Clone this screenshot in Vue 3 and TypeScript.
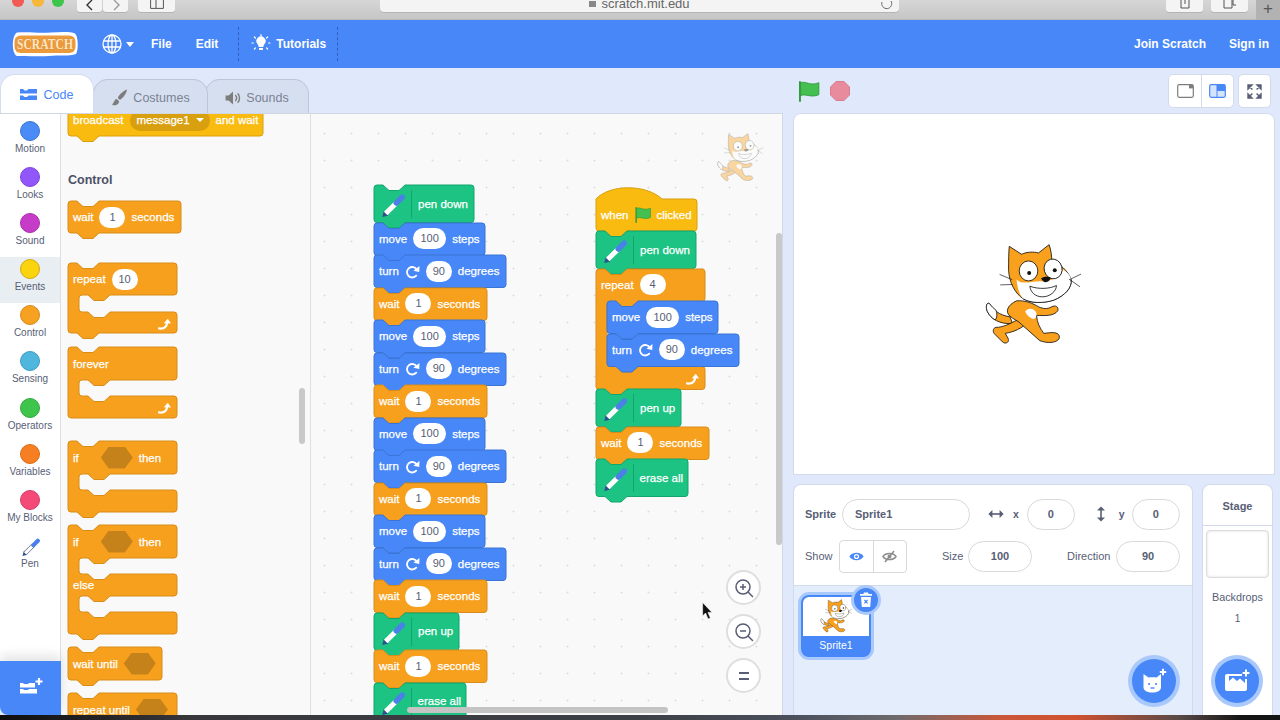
<script setup lang="ts">
type Part = { k: string; v?: string; w?: number; cls?: string }
type Row = { h: number; gap?: boolean; end?: boolean; parts?: Part[] }
type Block = {
  c?: string; w?: number; rows?: Row[]; hat?: boolean; cap?: boolean; open?: boolean;
  indent?: number; mt?: number; heading?: string; spacer?: number; pen?: boolean
}
type Stack = { cls: string; x?: number; y?: number; blocks: Block[] }

const t = (v: string): Part => ({ k: 't', v })
const n = (v: string, w = 26): Part => ({ k: 'n', v, w })
const ic = (k: string): Part => ({ k })
const H = 32.5

const move = (): Block => ({ c: 'motion', w: 111, rows: [{ h: H, parts: [t('move'), n('100', 33), t('steps')] }] })
const turn = (): Block => ({ c: 'motion', w: 132, rows: [{ h: H, parts: [t('turn'), ic('i-turn'), n('90'), t('degrees')] }] })
const wait = (): Block => ({ c: 'control', w: 113, rows: [{ h: H, parts: [t('wait'), n('1'), t('seconds')] }] })
const pen = (label: string, w: number): Block => ({ c: 'pen', w, pen: true, rows: [{ h: 37.5, parts: [ic('pen-cell'), t(label)] }] })

const palette: Block[] = [
  { c: 'events', w: 195, mt: -10, rows: [{ h: 32, parts: [t('broadcast'), { k: 'drop', v: 'message1' }, t('and wait')] }] },
  { heading: 'Control', mt: 34 },
  { c: 'control', w: 113, mt: 11, rows: [{ h: 32, parts: [t('wait'), n('1'), t('seconds')] }] },
  { c: 'control', w: 109, mt: 30, rows: [{ h: 32, parts: [t('repeat'), n('10')] }, { h: 17, gap: true }, { h: 21, end: true, parts: [ic('i-loop')] }] },
  { c: 'control', w: 109, mt: 14, cap: true, rows: [{ h: 33, parts: [t('forever')] }, { h: 16, gap: true }, { h: 22, end: true, parts: [ic('i-loop')] }] },
  { c: 'control', w: 109, mt: 23, rows: [{ h: 33, parts: [t('if'), { k: 'hex', cls: 'hex-if' }, t('then')] }, { h: 16, gap: true }, { h: 22 }] },
  { c: 'control', w: 109, mt: 13, rows: [{ h: 33, parts: [t('if'), { k: 'hex', cls: 'hex-if' }, t('then')] }, { h: 16, gap: true }, { h: 22, parts: [t('else')] }, { h: 16, gap: true }, { h: 22 }] },
  { c: 'control', w: 94, mt: 13, rows: [{ h: 33, parts: [t('wait until'), { k: 'hex' }] }] },
  { c: 'control', w: 109, mt: 13, rows: [{ h: 33, parts: [t('repeat until'), { k: 'hex' }] }, { h: 16, gap: true }, { h: 22 }] }
]

const leftStack: Block[] = [
  pen('pen down', 100),
  move(), turn(), wait(), move(), turn(), wait(), move(), turn(), wait(), move(), turn(), wait(),
  pen('pen up', 85), wait(), pen('erase all', 92)
]

const rightStack: Block[] = [
  { c: 'events', w: 101, hat: true, rows: [{ h: 43, parts: [t('when'), ic('i-flag'), t('clicked')] }] },
  pen('pen down', 100),
  { c: 'control', w: 109, open: true, rows: [{ h: H, parts: [t('repeat'), n('4')] }, { h: 65, gap: true }, { h: 23, end: true, parts: [ic('i-loop')] }] },
  { ...move(), indent: 11 }, { ...turn(), indent: 11 },
  { spacer: 23 },
  pen('pen up', 85), wait(), pen('erase all', 92)
]

const zones: { id: string; stacks: Stack[] }[] = [
  { id: 'palette', stacks: [{ cls: 'stack-flow', blocks: palette }] },
  { id: 'workspace', stacks: [
    { cls: 'stack-free', x: 63, y: 71, blocks: leftStack },
    { cls: 'stack-free', x: 285, y: 74, blocks: rightStack }
  ] }
]

function totalH(b: Block): number {
  return (b.rows ?? []).reduce((s, r) => s + r.h, 0)
}
function flowH(b: Block): number | undefined {
  if (b.spacer) return b.spacer
  if (b.heading) return 20
  return b.open ? b.rows![0].h : totalH(b)
}
function pathFor(b: Block): string {
  const w = b.w ?? 0
  const i = 11
  let d = b.hat
    ? `M0 11 C14 -4 50 -4 66 11 H${w - 3} Q${w} 11 ${w} 14`
    : `M0 3 Q0 0 3 0 H9 L15 5.5 H25 L31 0 H${w - 3} Q${w} 0 ${w} 3`
  let y = 0
  for (const r of b.rows ?? []) {
    const y0 = y
    y += r.h
    if (r.gap) {
      d += ` V${y0 - 3} Q${w} ${y0} ${w - 3} ${y0} H${i + 31} L${i + 25} ${y0 + 5.5} H${i + 15} L${i + 9} ${y0} H${i + 3} Q${i} ${y0} ${i} ${y0 + 3}`
      d += ` V${y - 3} Q${i} ${y} ${i + 3} ${y} H${i + 9} L${i + 15} ${y + 5.5} H${i + 25} L${i + 31} ${y} H${w - 3} Q${w} ${y} ${w} ${y + 3}`
    }
  }
  d += ` V${y - 3} Q${w} ${y} ${w - 3} ${y}`
  d += b.cap ? ' H3' : ` H31 L25 ${y + 5.5} H15 L9 ${y} H3`
  d += ` Q0 ${y} 0 ${y - 3} Z`
  return d
}

const categories = [
  { label: 'Motion', fill: '#4a8bf8', line: '#3a74d0' },
  { label: 'Looks', fill: '#9257fb', line: '#7a45d8' },
  { label: 'Sound', fill: '#c63cc9', line: '#a830ab' },
  { label: 'Events', fill: '#fbd40f', line: '#d4a90a', active: true },
  { label: 'Control', fill: '#f7a120', line: '#d48a1a' },
  { label: 'Sensing', fill: '#4fb7de', line: '#3d9cc2' },
  { label: 'Operators', fill: '#3fc44c', line: '#34a83f' },
  { label: 'Variables', fill: '#f57f22', line: '#d86c18' },
  { label: 'My Blocks', fill: '#f34a78', line: '#d63a66' },
  { label: 'Pen', pen: true }
]
const zooms = ['i-zoomin', 'i-zoomout', 'i-reset']
</script>

<template>
  <div class="page">
    <svg class="sprites" width="0" height="0" aria-hidden="true">
      <symbol id="i-pen" viewBox="0 0 24 24">
        <path d="M3 24 L4.4 18.4 L8.8 22.6 Z" fill="#2f4f8f" />
        <path d="M6.2 20.8 L16 11" stroke="#fff" stroke-width="4.6" />
        <path d="M16 11 L21.4 5.8" stroke="#4a80e8" stroke-width="5.2" stroke-linecap="round" />
      </symbol>
      <symbol id="i-pen-outlined" viewBox="0 0 24 24">
        <path d="M3 24 L4.4 18.4 L8.8 22.6 Z" fill="#2f4f8f" />
        <path d="M6.2 20.8 L16 11" stroke="#4f5a78" stroke-width="5.2" />
        <path d="M6.2 20.8 L16 11" stroke="#fff" stroke-width="3.8" />
        <path d="M16 11 L21.4 5.8" stroke="#4a80e8" stroke-width="5" stroke-linecap="round" />
      </symbol>
      <symbol id="i-turn" viewBox="0 0 16 16">
        <path d="M12.6 6 A5.6 5.6 0 1 0 12 12.4" fill="none" stroke="#fff" stroke-width="2" stroke-linecap="round" />
        <path d="M15.4 2.2 L15.2 8.6 L9 7.2 Z" fill="#fff" />
      </symbol>
      <symbol id="i-loop" viewBox="0 0 14 12">
        <path d="M1 10.4 C5.5 11 8.6 9 9.2 4.6" fill="none" stroke="#fff" stroke-width="2.2" stroke-linecap="round" />
        <path d="M5.8 5.2 L9.8 .8 L13 5.6 Z" fill="#fff" />
      </symbol>
      <symbol id="i-flag" viewBox="0 0 20 20">
        <path d="M1.4 1 V19" stroke="#2f9a3a" stroke-width="1.8" stroke-linecap="round" />
        <path d="M2 1.6 C7 -.2 11 5 19.4 1.6 V13 C11 16.6 7 11.4 2 14 Z" fill="#45bf4f" stroke="#2f9a3a" stroke-width=".8" stroke-linejoin="round" />
      </symbol>
      <symbol id="i-cat" viewBox="75 40 295 310">
        <path d="M150 262 C118 258 98 240 88 222 C80 218 76 232 82 246 C92 268 120 286 158 282 Z" fill="#f9a11d" stroke="#111" stroke-width="2.5" />
        <path d="M88 222 C80 218 76 232 82 246 C88 258 96 266 106 272 C112 264 112 252 108 242 C100 236 94 230 88 222 Z" fill="#fff" stroke="#111" stroke-width="2.5" />
        <path d="M178 268 C150 284 128 294 108 294 C98 296 98 308 104 314 L128 338 C138 346 150 338 144 326 L136 312 C160 308 186 298 204 278 Z" fill="#f9a11d" stroke="#111" stroke-width="2.5" />
        <path d="M170 214 C144 226 134 246 150 260 C160 270 176 274 186 286 L240 334 C260 342 290 342 298 328 C302 314 290 308 270 310 L252 312 C240 296 232 280 230 258 C250 258 282 262 294 244 C298 232 286 226 276 232 C262 240 250 238 236 232 C220 222 196 212 170 214 Z" fill="#f9a11d" stroke="#111" stroke-width="2.5" />
        <path d="M196 246 C206 232 226 238 230 252 C230 264 226 270 218 268 C208 264 200 256 196 246 Z" fill="#fff" />
        <path d="M148 50 L185 74 C202 66 222 66 236 70 L268 45 C274 62 276 80 276 94 C300 102 326 124 334 150 C338 174 316 198 282 212 C250 222 214 222 190 208 C166 192 148 160 146 122 C146 96 146 72 148 50 Z" fill="#f9a11d" stroke="#111" stroke-width="2.5" stroke-linejoin="round" />
        <path d="M170 150 C190 170 220 150 255 156 C285 150 300 140 310 120 C326 130 332 140 334 150 C338 174 316 198 282 212 C250 222 214 222 190 208 C178 196 172 172 170 150 Z" fill="#fff" />
        <path d="M334 150 C338 174 316 198 282 212 C250 222 214 222 190 208" fill="none" stroke="#111" stroke-width="2.5" />
        <ellipse cx="206" cy="124" rx="28" ry="30" fill="#fff" stroke="#111" stroke-width="2.5" />
        <ellipse cx="280" cy="118" rx="27" ry="30" fill="#fff" stroke="#111" stroke-width="2.5" transform="rotate(-15 280 118)" />
        <circle cx="208" cy="130" r="6" fill="#111" />
        <circle cx="285" cy="122" r="6" fill="#111" />
        <path d="M244 146 C250 140 268 140 272 144 C272 152 264 158 258 158 C252 158 246 152 244 146 Z" fill="#111" />
        <path d="M210 170 C236 180 270 178 290 168 C290 186 270 202 248 202 C226 202 212 188 210 170 Z" fill="#fff" stroke="#111" stroke-width="2.5" />
        <path d="M120 135 L156 150 M122 166 L156 165 M330 150 L363 134 M330 150 L360 171" stroke="#111" stroke-width="2" fill="none" stroke-linecap="round" />
      </symbol>
    </svg>

    <div class="chrome">
      <i class="light red"></i><i class="light amber"></i><i class="light green"></i>
      <div class="chrome-btn nav-back">
        <svg width="10" height="12" viewBox="0 0 10 12"><path d="M7 0 L2 5 L7 10" fill="none" stroke="#333" stroke-width="1.4" /></svg>
      </div>
      <div class="chrome-btn nav-fwd">
        <svg width="10" height="12" viewBox="0 0 10 12"><path d="M3 0 L8 5 L3 10" fill="none" stroke="#999" stroke-width="1.4" /></svg>
      </div>
      <div class="chrome-btn nav-side">
        <svg width="14" height="12" viewBox="0 0 14 12"><path d="M.6 0 V8.4 H13.4 V0 M6 0 V8.4" fill="none" stroke="#555" /></svg>
      </div>
      <div class="url">
        <i class="lock"></i><span>scratch.mit.edu</span>
        <svg class="reload" width="14" height="12" viewBox="0 0 14 12"><path d="M11 1 A5 5 0 1 1 2 2" fill="none" stroke="#666" /></svg>
      </div>
      <div class="chrome-btn nav-share">
        <svg width="12" height="12" viewBox="0 0 12 12"><path d="M2 0 V8 H10 V0 M6 0 V4" fill="none" stroke="#555" /></svg>
      </div>
      <div class="chrome-btn nav-tabs">
        <svg width="14" height="12" viewBox="0 0 14 12"><path d="M1 0 V8 H9 V0 M10 0 V5 H13" fill="none" stroke="#555" /></svg>
      </div>
      <div class="new-tab">+</div>
    </div>

    <header class="menubar">
      <svg class="logo" width="68" height="26" viewBox="0 0 68 26">
        <path d="M6 1.5 C20 .5 26 2.5 40 1.5 C50 .8 60 .5 64 2.5 C67.5 5 67.5 20 65 23 C58 25.5 48 24 38 25 C26 25.8 14 24.5 6 25 C.5 23 .5 4 6 1.5 Z" fill="#fff" />
        <rect x="3.5" y="4.5" width="61" height="17.5" rx="6" fill="#eb9a3c" />
        <text x="34" y="18.4" text-anchor="middle" class="logo-text" textLength="56" lengthAdjust="spacingAndGlyphs">SCRATCH</text>
      </svg>
      <svg class="globe" width="20" height="20" viewBox="0 0 20 20">
        <g fill="none" stroke="#fff" stroke-width="1.3">
          <circle cx="10" cy="10" r="9" />
          <ellipse cx="10" cy="10" rx="4" ry="9" />
          <path d="M10 1 V19 M1.6 7 H18.4 M1.6 13 H18.4" />
        </g>
      </svg>
      <i class="caret"></i>
      <span class="menu-item file">File</span>
      <span class="menu-item edit">Edit</span>
      <div class="tut">
        <svg width="20" height="20" viewBox="0 0 20 20">
          <path d="M6.4 10 A4.6 4.6 0 1 1 13.6 10 C12.6 11.2 12.4 12 12.4 13 H7.6 C7.6 12 7.4 11.2 6.4 10 Z M8 14 H12 V16 H8 Z" fill="#fff" />
          <path d="M10 .6 V2 M3.4 3 L4.4 4 M16.6 3 L15.6 4 M1 9 H2.4 M17.6 9 H19 M3.4 15 L4.4 14 M16.6 15 L15.6 14" stroke="#fff" stroke-width="1.2" stroke-linecap="round" />
        </svg>
        <span class="menu-item">Tutorials</span>
      </div>
      <span class="menu-item join">Join Scratch</span>
      <span class="menu-item sign">Sign in</span>
    </header>

    <main class="body">
      <section class="left">
        <nav class="tabs">
          <div class="tab active">
            <svg width="20" height="14" viewBox="0 0 20 14">
              <path d="M1 1 H4 L5.5 2.4 H8 L9.5 1 H18 V5.5 H1 Z M1 7.5 H4 L5.5 9 H8 L9.5 7.5 H18 V12 H1 Z" fill="#4787f7" />
            </svg>
            <span>Code</span>
          </div>
          <div class="tab second">
            <svg width="17" height="18" viewBox="0 0 17 18">
              <path d="M16 .6 C12 2 8.4 5.6 6.8 9 L9 11 C12 9 15.4 5 16 .6 Z M5.6 10 C3 10.4 3.6 13.6 1 15.4 C4 17.4 8.4 15.6 8 12 Z" fill="#7d7d7d" />
            </svg>
            <span>Costumes</span>
          </div>
          <div class="tab third">
            <svg width="16" height="14" viewBox="0 0 16 14">
              <path d="M.6 4.4 H3.6 L8 .6 V13.4 L3.6 9.6 H.6 Z" fill="#7d7d7d" />
              <path d="M10.6 4.4 C11.8 5.8 11.8 8.2 10.6 9.6 M13 2.8 C15 5 15 9 13 11.2" fill="none" stroke="#7d7d7d" stroke-width="1.4" stroke-linecap="round" />
            </svg>
            <span>Sounds</span>
          </div>
        </nav>

        <div class="panel">
          <aside class="cats">
            <div v-for="c in categories" :key="c.label" class="cat" :class="{ on: c.active }">
              <svg v-if="c.pen" class="cat-pen" viewBox="0 0 24 24"><use href="#i-pen-outlined" /></svg>
              <i v-else class="dot" :style="{ background: c.fill, borderColor: c.line }"></i>
              <span>{{ c.label }}</span>
            </div>
            <div class="ext">
              <svg width="24" height="22" viewBox="0 0 24 22">
                <path d="M1 6 H4 L5 7 H9 L10 6 H16 V10.4 H1 Z M1 12 H4 L5 13 H9 L10 12 H18 V16.6 H1 Z" fill="#fff" />
                <path d="M20 1 V8 M16.5 4.5 H23.5" stroke="#fff" stroke-width="2.2" />
              </svg>
            </div>
          </aside>

          <div v-for="z in zones" :key="z.id" class="zone" :class="z.id">
            <div
              v-for="(s, si) in z.stacks"
              :key="si"
              :class="s.cls"
              :style="s.x !== undefined ? { left: s.x + 'px', top: s.y + 'px' } : undefined"
            >
              <div
                v-for="(b, bi) in s.blocks"
                :key="bi"
                class="block"
                :class="[b.c, { heading: b.heading }]"
                :style="{
                  width: b.w ? b.w + 'px' : undefined,
                  height: flowH(b) + 'px',
                  marginLeft: b.indent ? b.indent + 'px' : undefined,
                  marginTop: b.mt ? b.mt + 'px' : undefined
                }"
              >
                <template v-if="b.heading">{{ b.heading }}</template>
                <template v-else-if="b.rows">
                  <svg class="shape" :width="b.w" :height="totalH(b) + 7">
                    <path :d="pathFor(b)" />
                  </svg>
                  <div
                    v-for="(r, ri) in b.rows"
                    :key="ri"
                    class="row"
                    :class="{ end: r.end, hatrow: b.hat }"
                    :style="{ height: r.h + 'px' }"
                  >
                    <template v-for="(p, pi) in r.parts" :key="pi">
                      <span v-if="p.k === 't'" class="txt">{{ p.v }}</span>
                      <span v-else-if="p.k === 'n'" class="pill" :style="{ width: p.w + 'px' }">{{ p.v }}</span>
                      <span v-else-if="p.k === 'drop'" class="drop">{{ p.v }}<i class="drop-caret"></i></span>
                      <span v-else-if="p.k === 'hex'" class="hex" :class="p.cls"></span>
                      <span v-else-if="p.k === 'pen-cell'" class="pen-cell">
                        <svg width="26" height="26" viewBox="0 0 24 24"><use href="#i-pen" /></svg>
                      </span>
                      <svg v-else class="ico" :class="p.k"><use :href="'#' + p.k" /></svg>
                    </template>
                  </div>
                </template>
              </div>
            </div>

            <template v-if="z.id === 'palette'">
              <i class="scroll-v pal"></i>
            </template>
            <template v-else>
              <svg class="watermark" viewBox="0 0 295 310"><use href="#i-cat" width="295" height="310" /></svg>
              <i class="scroll-v work"></i>
              <i class="scroll-h"></i>
              <div class="zoombar">
                <button v-for="zb in zooms" :key="zb" class="zoom-btn">
                  <svg v-if="zb !== 'i-reset'" width="20" height="20" viewBox="0 0 20 20" fill="none" stroke="#575e75" stroke-width="1.5">
                    <circle cx="9" cy="9" r="7" />
                    <path d="M14 14 L18.5 18.5" stroke-linecap="round" />
                    <path d="M6 9 H12" />
                    <path v-if="zb === 'i-zoomin'" d="M9 6 V12" />
                  </svg>
                  <svg v-else width="14" height="10" viewBox="0 0 14 10"><path d="M2 2 H12 M2 8 H12" stroke="#575e75" stroke-width="2" /></svg>
                </button>
              </div>
              <svg class="cursor" width="11" height="18" viewBox="0 0 11 18">
                <path d="M.6 .6 V14 L3.6 11 L6 17 L8.4 16 L6 10.4 H10 Z" fill="#111" stroke="#fff" stroke-width=".6" />
              </svg>
            </template>
          </div>
        </div>
      </section>

      <section class="right">
        <div class="stage-top">
          <svg class="green-flag" width="22" height="21"><use href="#i-flag" /></svg>
          <svg class="stop" width="20" height="20" viewBox="0 0 20 20">
            <path d="M6 .5 H14 L19.5 6 V14 L14 19.5 H6 L.5 14 V6 Z" fill="#e88b9c" stroke="#d87a8c" />
          </svg>
          <div class="layout-group">
            <div class="lbtn">
              <svg width="17" height="14" viewBox="0 0 17 14">
                <rect x=".7" y=".7" width="15.6" height="12.6" rx="1.5" fill="none" stroke="#7d7d7d" stroke-width="1.2" />
                <rect x="12" y="1" width="4" height="3.4" fill="#7d7d7d" />
              </svg>
            </div>
            <div class="lbtn">
              <svg width="17" height="14" viewBox="0 0 17 14">
                <rect x=".7" y=".7" width="15.6" height="12.6" rx="1.5" fill="#d5e4fd" stroke="#4787f7" stroke-width="1.2" />
                <path d="M8 .7 H16 V7 H8 Z" fill="#4787f7" />
                <path d="M8 .7 V13.3" stroke="#4787f7" />
              </svg>
            </div>
          </div>
          <div class="lbtn full">
            <svg width="15" height="15" viewBox="0 0 15 15">
              <path d="M1 1 L5 1 L1 5 Z M14 1 L10 1 L14 5 Z M1 14 L5 14 L1 10 Z M14 14 L10 14 L14 10 Z M2 2 L5.4 5.4 M13 2 L9.6 5.4 M2 13 L5.4 9.6 M13 13 L9.6 9.6" fill="#575e75" stroke="#575e75" stroke-width="1.4" />
            </svg>
          </div>
        </div>

        <div class="stage">
          <svg class="stage-cat" viewBox="0 0 295 310"><use href="#i-cat" width="295" height="310" /></svg>
        </div>

        <div class="lower">
          <div class="sprite-pane">
            <div class="info">
              <div class="info-row">
                <span class="lbl strong w37">Sprite</span>
                <span class="field name">Sprite1</span>
                <svg class="ml18" width="16" height="10" viewBox="0 0 16 10">
                  <path d="M3 5 H13" stroke="#575e75" stroke-width="1.6" />
                  <path d="M4.4 1 L.4 5 L4.4 9 Z M11.6 1 L15.6 5 L11.6 9 Z" fill="#575e75" />
                </svg>
                <span class="lbl strong axis ml9">x</span>
                <span class="field num w48 ml8">0</span>
                <svg class="ml21" width="10" height="16" viewBox="0 0 10 16">
                  <path d="M5 3 V13" stroke="#575e75" stroke-width="1.6" />
                  <path d="M1 4.4 L5 .4 L9 4.4 Z M1 11.6 L5 15.6 L9 11.6 Z" fill="#575e75" />
                </svg>
                <span class="lbl strong axis ml13">y</span>
                <span class="field num w48 ml7">0</span>
              </div>
              <div class="info-row">
                <span class="lbl w34">Show</span>
                <div class="toggle">
                  <span class="tog on">
                    <svg width="15" height="11" viewBox="0 0 15 11">
                      <path d="M.4 5.5 C3 .6 12 .6 14.6 5.5 C12 10.4 3 10.4 .4 5.5 Z" fill="#4787f7" />
                      <circle cx="7.5" cy="5.5" r="2.6" fill="#fff" />
                      <circle cx="7.5" cy="5.5" r="1.3" fill="#4787f7" />
                    </svg>
                  </span>
                  <span class="tog">
                    <svg width="15" height="13" viewBox="0 0 15 13">
                      <path d="M1 6.5 C3.4 2.4 11.6 2.4 14 6.5 C11.6 10.6 3.4 10.6 1 6.5 Z" fill="none" stroke="#8d8d8d" stroke-width="1.5" />
                      <circle cx="7.5" cy="6.5" r="2" fill="#8d8d8d" />
                      <path d="M3 12 L12 1" stroke="#8d8d8d" stroke-width="1.5" />
                    </svg>
                  </span>
                </div>
                <span class="lbl ml35 w26">Size</span>
                <span class="field num w64">100</span>
                <span class="lbl ml35 w49">Direction</span>
                <span class="field num w64">90</span>
              </div>
            </div>
            <div class="sprite-list">
              <div class="card">
                <div class="thumb">
                  <svg class="card-cat" viewBox="0 0 295 310"><use href="#i-cat" width="295" height="310" /></svg>
                </div>
                <div class="card-name">Sprite1</div>
                <div class="trash">
                  <svg width="14" height="16" viewBox="0 0 14 16">
                    <path d="M5 .6 H9 L9.6 2 H13 V3.8 H1 V2 H4.4 Z M2 5 H12 L11.2 15 H2.8 Z" fill="#fff" />
                    <path d="M5.4 8 L8.6 11.4 M8.6 8 L5.4 11.4" stroke="#4787f7" stroke-width="1.2" />
                  </svg>
                </div>
              </div>
              <div class="fab sprite-fab">
                <svg width="26" height="26" viewBox="0 0 26 26">
                  <path d="M2.5 6 L7.5 9.6 C10 9 13 9 15.5 9.6 L20 6 V19 C20 23 16 24.5 11.5 24.5 C6.5 24.5 2.5 23 2.5 19 Z" fill="#fff" />
                  <path d="M8 16 H8.1 M15 16 H15.1" stroke="#4787f7" stroke-width="2" stroke-linecap="round" />
                  <path d="M9.5 20 H13.5" stroke="#4787f7" stroke-width="1.4" />
                  <path d="M22 .8 V7.2 M18.8 4 H25.2" stroke="#fff" stroke-width="2" />
                </svg>
              </div>
            </div>
          </div>

          <div class="stage-pane">
            <div class="stage-title">Stage</div>
            <div class="stage-thumb"></div>
            <div class="backdrops">Backdrops</div>
            <div class="backdrops one">1</div>
            <div class="fab backdrop-fab">
              <svg width="26" height="24" viewBox="0 0 26 24">
                <path d="M3 5 H18 V7 H5 V12 L9 8.6 L13 12 L16 9.6 L21 14 V10 H23 V20 A2 2 0 0 1 21 22 H3 A2 2 0 0 1 1 20 V7 A2 2 0 0 1 3 5 Z" fill="#fff" />
                <path d="M22 .6 V7.4 M18.6 4 H25.4" stroke="#fff" stroke-width="2" />
              </svg>
            </div>
          </div>
        </div>
      </section>
    </main>
    <div class="desk"></div>
  </div>
</template>

<style>
html, body { margin: 0; background: #e0e9fb; }
</style>

<style scoped>
.page {
  width: 1280px;
  height: 720px;
  overflow: hidden;
  display: flex;
  flex-direction: column;
  font-family: "Liberation Sans", Arial, sans-serif;
  background: #e0e9fb;
  color: #575e75;
  position: relative;
}
.sprites { position: absolute; }

/* browser chrome */
.chrome {
  height: 20px;
  flex: none;
  display: flex;
  align-items: flex-start;
  padding-left: 12px;
  background: linear-gradient(#d6d6d6, #c6c6c6);
  box-sizing: border-box;
  border-bottom: 1px solid #b8b8b8;
}
.light { width: 12px; height: 12px; border-radius: 50%; margin: -5px 8px 0 0; }
.light.red { background: #f25a55; }
.light.amber { background: #f6b73a; }
.light.green { background: #3ec64b; }
.chrome-btn {
  height: 12px;
  background: #f4f4f4;
  border-radius: 0 0 3px 3px;
  display: flex;
  justify-content: center;
  align-items: flex-start;
  overflow: hidden;
  box-shadow: 0 1px 0 #b4b4b4;
}
.nav-back { width: 25px; margin-left: 5px; }
.nav-fwd { width: 25px; margin-left: 1px; }
.nav-side { width: 37px; margin-left: 10px; }
.url {
  width: 519px;
  height: 12px;
  margin-left: 205px;
  background: #f4f4f4;
  border-radius: 0 0 4px 4px;
  box-shadow: 0 1px 0 #b4b4b4;
  position: relative;
  display: flex;
  justify-content: center;
  align-items: center;
  font-size: 13px;
  color: #666;
  gap: 5px;
  overflow: hidden;
}
.url span { position: relative; top: -3px; }
.lock { width: 7px; height: 6px; background: #888; position: relative; top: -2px; }
.reload { position: absolute; right: 5px; top: 0; }
.nav-share { width: 37px; margin-left: 267px; }
.nav-tabs { width: 37px; margin-left: 8px; }
.new-tab {
  width: 24px;
  height: 20px;
  margin-left: 8px;
  background: #b2b2b2;
  color: #555;
  font-size: 17px;
  line-height: 18px;
  text-align: center;
}

/* menu */
.menubar {
  height: 48px;
  flex: none;
  background: #4787f7;
  display: flex;
  align-items: center;
  color: #fff;
}
.logo { margin-left: 11px; }
.logo-text {
  font-family: "Liberation Serif", serif;
  font-size: 15px;
  font-weight: 700;
  fill: #fde6c4;
  stroke: #d9832a;
  stroke-width: .5px;
  paint-order: stroke;
}
.globe { margin-left: 23px; }
.caret {
  width: 0; height: 0; margin-left: 4px;
  border: 4px solid transparent; border-top: 5px solid #fff; border-bottom: 0;
}
.menu-item { font-size: 12px; font-weight: 700; }
.file { margin-left: 17px; }
.edit { margin-left: 24px; }
.tut {
  margin-left: 20px;
  height: 34px;
  width: 100px;
  padding-left: 12px;
  box-sizing: border-box;
  display: flex;
  align-items: center;
  gap: 5px;
  border-left: 1px dashed rgba(0, 0, 60, .3);
  border-right: 1px dashed rgba(0, 0, 60, .3);
}
.join { margin-left: auto; }
.sign { margin: 0 11px 0 23px; }

/* layout */
.body { flex: none; height: 647px; display: flex; }
.left { width: 783px; flex: none; display: flex; flex-direction: column; }
.right { width: 482px; margin-left: 10px; flex: none; display: flex; flex-direction: column; }

/* tabs */
.tabs { height: 45px; flex: none; display: flex; align-items: flex-end; }
.tab {
  height: 34px;
  box-sizing: border-box;
  background: #d6dff0;
  border: 1px solid #bcc6da;
  border-bottom: 0;
  border-radius: 15px 15px 0 0;
  display: flex;
  justify-content: center;
  align-items: center;
  gap: 5px;
  padding-top: 2px;
  font-size: 12.5px;
  color: #7b8294;
  position: relative;
}
.tab.active {
  height: 39px;
  width: 94px;
  background: #fff;
  color: #4787f7;
  font-size: 12.5px;
  border-color: #d4dced;
  z-index: 2;
  padding: 2px 2px 0 0;
}
.tab.second { width: 115px; margin-left: -1px; z-index: 1; }
.tab.third { width: 104px; margin-left: -3px; }

/* panel */
.panel {
  flex: 1;
  min-height: 0;
  display: flex;
  background: #f9f9f9;
  border-right: 1px solid #cfd6e4;
  border-top: 1px solid #cfd6e4;
  border-bottom-left-radius: 8px;
  overflow: hidden;
  position: relative;
}
.cats {
  width: 61px;
  flex: none;
  background: #fff;
  border-right: 1px solid #dcdfe5;
  box-sizing: border-box;
  padding-top: 5px;
  position: relative;
}
.cat {
  height: 46.1px;
  display: flex;
  flex-direction: column;
  align-items: center;
  font-size: 10px;
  color: #575e75;
  gap: 2px;
  box-sizing: border-box;
  padding-top: 1px;
  line-height: 12px;
}
.cat.on { background: #e9eef2; }
.dot { width: 20px; height: 20px; box-sizing: border-box; border-radius: 50%; border: 1px solid; flex: none; margin-top: 1px; }
.cat-pen { width: 20px; height: 20px; flex: none; margin-top: 1px; }
.ext {
  position: absolute;
  left: 0; right: -1px; bottom: 0;
  height: 54px;
  background: #4787f7;
  display: flex;
  align-items: center;
  justify-content: center;
  box-shadow: 0 -6px 10px rgba(0, 0, 0, .1);
}

.zone { position: relative; overflow: hidden; }
.palette { width: 250px; flex: none; box-sizing: border-box; padding-left: 7px; border-right: 1px solid #dcdfe5; }
.workspace {
  flex: 1;
  background-color: #f9f9f9;
  background-image: radial-gradient(circle at center, #dedede .8px, transparent 1.2px);
  background-size: 27px 27px;
  background-position: 0 6px;
}
.stack-flow { display: flex; flex-direction: column; align-items: flex-start; }
.stack-free { position: absolute; display: flex; flex-direction: column; align-items: flex-start; }

/* blocks */
.block { position: relative; flex: none; color: #fff; font-size: 11.5px; }
.block.heading { font-size: 12.5px; font-weight: 700; color: #4b5168; line-height: 20px; }
.shape { position: absolute; left: 0; top: 0; overflow: visible; }
.shape path { stroke-width: 1; }
.motion .shape path { fill: #4787f7; stroke: #3b74d4; }
.control .shape path { fill: #f6a01e; stroke: #d88d18; }
.events .shape path { fill: #f9bb10; stroke: #d99f0c; }
.pen .shape path { fill: #1cc383; stroke: #13a56e; }
.row {
  position: relative;
  display: flex;
  align-items: center;
  gap: 6px;
  padding: 0 5px;
  box-sizing: border-box;
  white-space: nowrap;
}
.row.end { justify-content: flex-end; }
.row.hatrow { padding-top: 11px; }
.txt { -webkit-text-stroke: .25px #fff; }
.pill {
  height: 21px;
  flex: none;
  border-radius: 11px;
  background: #fff;
  color: #575e75;
  text-align: center;
  line-height: 21px;
  font-size: 11px;
}
.drop {
  height: 21px;
  width: 80px;
  flex: none;
  box-sizing: border-box;
  padding-left: 7px;
  border-radius: 11px;
  background: #d89f0e;
  color: #fff;
  display: flex;
  align-items: center;
  gap: 6px;
  -webkit-text-stroke: .25px #fff;
}
.drop-caret {
  width: 0; height: 0;
  border: 4px solid transparent; border-top: 4px solid #fff; border-bottom: 0;
}
.hex {
  width: 32px;
  height: 22px;
  flex: none;
  background: #c5821a;
  clip-path: polygon(25% 0, 75% 0, 100% 50%, 75% 100%, 25% 100%, 0 50%);
}
.hex-if { margin: 0 0 0 16px; }
.pen-cell {
  width: 33px;
  height: 28px;
  margin-top: 1px;
  box-sizing: border-box;
  border-right: 1px solid #13a56e;
  display: flex;
  align-items: center;
}
.ico { flex: none; }
.i-turn { width: 15px; height: 15px; }
.i-loop { width: 14px; height: 12px; margin-top: 2px; }
.i-flag { width: 16px; height: 16px; margin: 0; }

/* workspace overlays */
.scroll-v { position: absolute; width: 6px; background: #c9c9c9; border-radius: 3px; }
.scroll-v.pal { left: 238px; top: 274px; height: 56px; }
.scroll-v.work { right: 0; top: 119px; height: 312px; }
.scroll-h {
  position: absolute;
  left: 96px;
  bottom: 2px;
  width: 261px;
  height: 6px;
  background: #c4c4c4;
  border-radius: 3px;
}
.watermark { position: absolute; left: 406px; top: 18px; width: 47px; height: 51px; opacity: .4; }
.zoombar {
  position: absolute;
  left: 415px;
  top: 456px;
  display: flex;
  flex-direction: column;
  gap: 9px;
}
.zoom-btn {
  width: 35px;
  height: 35px;
  padding: 0;
  border: 2px solid #dedede;
  border-radius: 50%;
  background: #fff;
  display: flex;
  align-items: center;
  justify-content: center;
}
.cursor { position: absolute; left: 391px; top: 488px; }

/* stage */
.stage-top { height: 45px; flex: none; display: flex; align-items: flex-start; }
.green-flag { margin: 13px 0 0 5px; }
.stop { margin: 13px 0 0 10px; }
.layout-group {
  margin: 6px 0 0 318px;
  display: flex;
  background: #fff;
  border: 1px solid #d3dbeb;
  border-radius: 5px;
}
.lbtn {
  width: 32px;
  height: 32px;
  box-sizing: border-box;
  display: flex;
  align-items: center;
  justify-content: center;
  background: #fff;
  border-radius: 5px;
}
.layout-group .lbtn + .lbtn { border-left: 1px solid #d3dbeb; border-radius: 0 5px 5px 0; }
.lbtn.full { width: 33px; height: 34px; margin: 6px 0 0 4px; border: 1px solid #d3dbeb; }
.stage {
  height: 362px;
  flex: none;
  box-sizing: border-box;
  background: #fff;
  border: 1px solid #d3dbeb;
  border-radius: 8px 8px 0 0;
  position: relative;
}
.stage-cat { position: absolute; left: 191px; top: 129px; width: 98px; height: 103px; }

.lower { margin-top: 9px; flex: 1; display: flex; min-height: 0; gap: 9px; }
.sprite-pane {
  width: 400px;
  flex: none;
  display: flex;
  flex-direction: column;
  border: 1px solid #d3dbeb;
  border-bottom: 0;
  box-sizing: border-box;
  border-radius: 8px 8px 0 0;
  overflow: hidden;
}
.info {
  height: 101px;
  flex: none;
  box-sizing: border-box;
  background: #fff;
  border-bottom: 1px solid #d3dbeb;
  padding: 13px 0 0 11px;
  display: flex;
  flex-direction: column;
  gap: 10px;
}
.info-row { display: flex; align-items: center; height: 32px; }
.lbl { font-size: 11px; color: #575e75; flex: none; white-space: nowrap; }
.strong { font-weight: 700; }
.axis { font-size: 10.5px; }
.w34 { width: 34px; } .w37 { width: 37px; } .w26 { width: 26px; } .w49 { width: 49px; }
.ml7 { margin-left: 7px; } .ml8 { margin-left: 8px; } .ml9 { margin-left: 9px; } .ml13 { margin-left: 13px; }
.ml18 { margin-left: 18px; } .ml21 { margin-left: 21px; } .ml35 { margin-left: 35px; }
.field {
  height: 31px;
  box-sizing: border-box;
  border: 1px solid #d9d9d9;
  border-radius: 16px;
  font-size: 11px;
  font-weight: 700;
  color: #575e75;
  line-height: 29px;
  flex: none;
}
.field.name { width: 128px; padding-left: 12px; }
.field.num { text-align: center; }
.w48 { width: 48px; } .w64 { width: 64px; }
.toggle {
  width: 68px;
  height: 33px;
  flex: none;
  display: flex;
  box-sizing: border-box;
  border: 1px solid #d9d9d9;
  border-radius: 4px;
}
.tog { flex: 1; display: flex; align-items: center; justify-content: center; }
.tog + .tog { border-left: 1px solid #d9d9d9; }
.sprite-list { flex: 1; background: #e4edfc; position: relative; }
.card {
  position: absolute;
  left: 7px;
  top: 9px;
  width: 70px;
  height: 62px;
  box-sizing: border-box;
  border: 2px solid #4787f7;
  border-radius: 8px;
  box-shadow: 0 0 0 3px #a9c8fb;
  background: #4787f7;
  display: flex;
  flex-direction: column;
}
.thumb { height: 39px; background: #fff; border-radius: 6px 6px 0 0; flex: none; position: relative; }
.card-cat { position: absolute; left: 17px; top: 2px; width: 33px; height: 34px; }
.card-name { flex: 1; font-size: 10.5px; color: #fff; text-align: center; line-height: 19px; }
.trash {
  position: absolute;
  left: 51px;
  top: -9px;
  width: 24px;
  height: 24px;
  border-radius: 50%;
  background: #4787f7;
  box-shadow: 0 0 0 3px #a9c8fb;
  display: flex;
  align-items: center;
  justify-content: center;
}
.fab {
  position: absolute;
  width: 44px;
  height: 44px;
  border-radius: 50%;
  background: #4787f7;
  box-shadow: 0 0 0 4px #a9c8fb;
  display: flex;
  align-items: center;
  justify-content: center;
}
.sprite-fab { right: 16px; bottom: 12px; }
.stage-pane {
  width: 71px;
  flex: none;
  box-sizing: border-box;
  background: #fff;
  border: 1px solid #d3dbeb;
  border-bottom: 0;
  border-radius: 8px 8px 0 0;
  position: relative;
  display: flex;
  flex-direction: column;
  align-items: center;
}
.stage-title {
  width: 100%;
  height: 41px;
  flex: none;
  box-sizing: border-box;
  border-bottom: 1px solid #d3dbeb;
  font-size: 11px;
  font-weight: 700;
  text-align: center;
  line-height: 42px;
}
.stage-thumb {
  width: 63px;
  height: 48px;
  flex: none;
  margin-top: 4px;
  box-sizing: border-box;
  border: 1px solid #dcdcdc;
  border-radius: 4px;
  box-shadow: inset 0 0 3px #ddd;
}
.backdrops { font-size: 10.8px; margin-top: 13px; line-height: 13px; }
.backdrops.one { font-size: 10px; margin-top: 8px; }
.backdrop-fab { left: 12px; bottom: 12px; }

.desk {
  position: absolute;
  left: 0;
  right: 0;
  bottom: 0;
  height: 5px;
  background: linear-gradient(90deg, #0e0e0e 0, #1c1c1e 5%, #38383c 15%, #3c3f46 50%, #4a505c 62%, #6d6a6c 70%, #c9583a 78%, #d0522f 84%, #5a4a48 92%, #141414 97%);
}
</style>
